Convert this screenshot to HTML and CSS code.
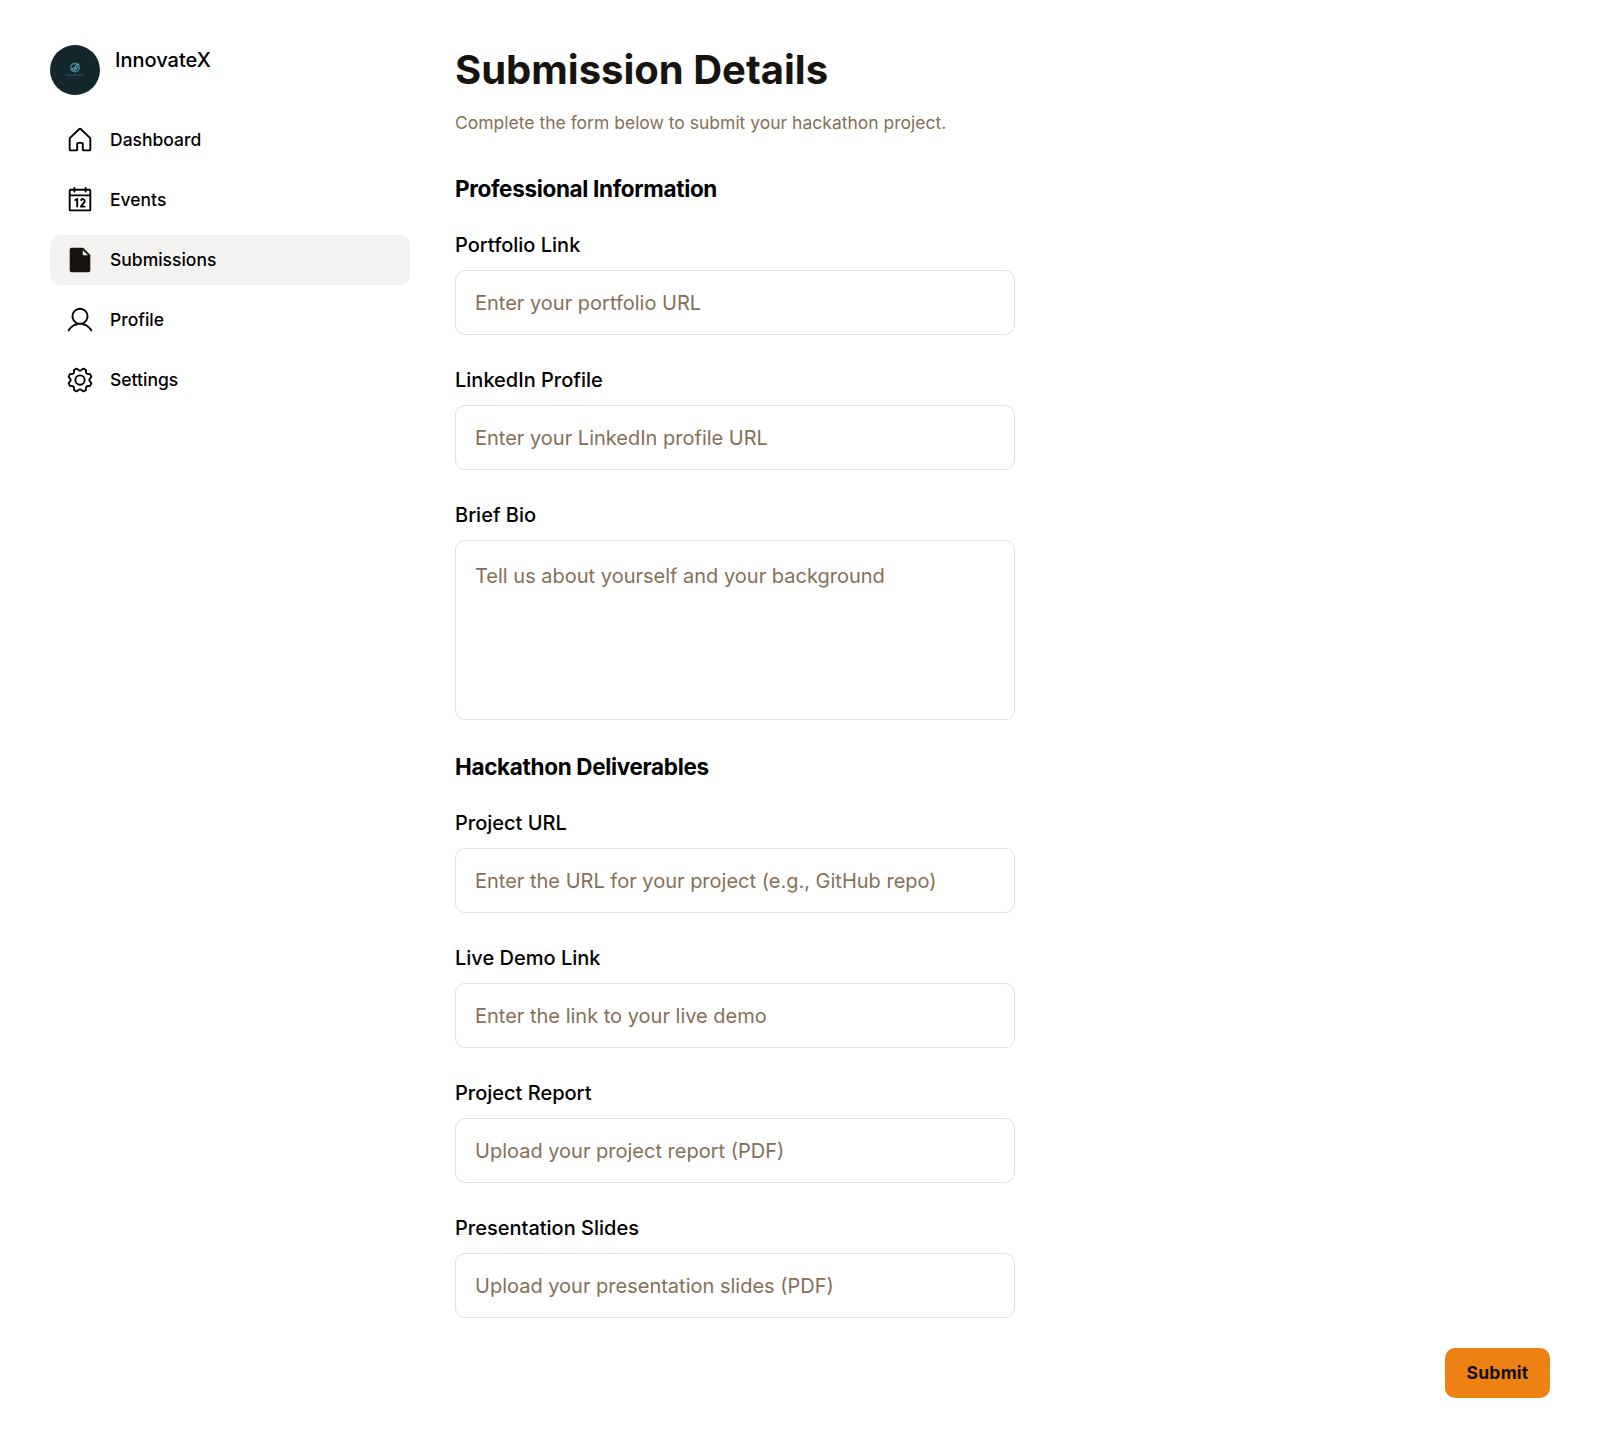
FILE: index.html
```html
<!DOCTYPE html>
<html lang="en">
<head>
<meta charset="utf-8">
<title>InnovateX – Submission Details</title>
<link rel="stylesheet" href="styles.css">
</head>
<body>
<div class="layout">
  <aside class="sidebar">
    <div class="brand">
      <svg class="avatar" viewBox="0 0 50 50" aria-hidden="true">
        <circle cx="25" cy="25" r="25" fill="#14272d"/>
        <circle cx="25" cy="22.6" r="4.2" fill="none" stroke="#3f8493" stroke-width="1.5"/>
        <path d="M21.8 25.2c1-3 3-1.6 3.6-3.4s2-2.6 3.6-2.4M24 26c.6-2.600 3-1.600 4-4.200" fill="none" stroke="#62abb8" stroke-width="1.2"/>
        <text class="avatar-name" x="24.700" y="31.300" text-anchor="middle" textLength="18.500">TECHNOBUREZT</text>
        <path d="M19 32.700h12" stroke="#24383e" stroke-width=".5"/>
      </svg>
      <span class="brand-name">InnovateX</span>
    </div>
    <nav class="nav">
      <a class="nav-item">
        <svg class="icon" viewBox="0 0 256 256"><path d="M218.83,103.77l-80-75.48a1.14,1.14,0,0,1-.11-.11,16,16,0,0,0-21.53,0l-.11.11L37.17,103.77A16,16,0,0,0,32,115.55V208a16,16,0,0,0,16,16H96a16,16,0,0,0,16-16V160h32v48a16,16,0,0,0,16,16h48a16,16,0,0,0,16-16V115.55A16,16,0,0,0,218.83,103.77ZM208,208H160V160a16,16,0,0,0-16-16H112a16,16,0,0,0-16,16v48H48V115.55l.11-.1L128,40l79.9,75.43.11.1Z"/></svg>
        <span class="nav-label">Dashboard</span>
      </a>
      <a class="nav-item">
        <svg class="icon" viewBox="0 0 256 256"><path d="M208,32H184V24a8,8,0,0,0-16,0v8H88V24a8,8,0,0,0-16,0v8H48A16,16,0,0,0,32,48V208a16,16,0,0,0,16,16H208a16,16,0,0,0,16-16V48A16,16,0,0,0,208,32ZM72,48v8a8,8,0,0,0,16,0V48h80v8a8,8,0,0,0,16,0V48h24V80H48V48ZM208,208H48V96H208V208Zm-96-88v64a8,8,0,0,1-16,0V132.94l-4.42,2.22a8,8,0,0,1-7.16-14.32l16-8A8,8,0,0,1,112,120Zm59.16,30.45L152,176h16a8,8,0,0,1,0,16H136a8,8,0,0,1-6.4-12.8l28.78-38.37A8,8,0,1,0,145.07,132a8,8,0,1,1-13.85-8A24,24,0,0,1,176,136,23.76,23.76,0,0,1,171.16,150.45Z"/></svg>
        <span class="nav-label">Events</span>
      </a>
      <a class="nav-item nav-item-active">
        <svg class="icon" viewBox="0 0 256 256"><path d="M213.66,82.34l-56-56A8,8,0,0,0,152,24H56A16,16,0,0,0,40,40V216a16,16,0,0,0,16,16H200a16,16,0,0,0,16-16V88A8,8,0,0,0,213.66,82.34ZM152,88V44l44,44Z"/></svg>
        <span class="nav-label">Submissions</span>
      </a>
      <a class="nav-item">
        <svg class="icon" viewBox="0 0 256 256"><path d="M230.92,212c-15.23-26.33-38.7-45.21-66.09-54.16a72,72,0,1,0-73.66,0C63.78,166.78,40.31,185.66,25.08,212a8,8,0,1,0,13.85,8c18.84-32.56,52.14-52,89.07-52s70.23,19.44,89.07,52a8,8,0,1,0,13.85-8ZM72,96a56,56,0,1,1,56,56A56.06,56.06,0,0,1,72,96Z"/></svg>
        <span class="nav-label">Profile</span>
      </a>
      <a class="nav-item">
        <svg class="icon" viewBox="0 0 256 256"><path d="M128,80a48,48,0,1,0,48,48A48.05,48.05,0,0,0,128,80Zm0,80a32,32,0,1,1,32-32A32,32,0,0,1,128,160Zm88-29.84q.06-2.16,0-4.32l14.92-18.64a8,8,0,0,0,1.48-7.06,107.21,107.21,0,0,0-10.88-26.25,8,8,0,0,0-6-3.93l-23.72-2.64q-1.48-1.56-3-3L186,40.54a8,8,0,0,0-3.94-6,107.71,107.71,0,0,0-26.25-10.87,8,8,0,0,0-7.06,1.49L130.16,40Q128,40,125.84,40L107.2,25.11a8,8,0,0,0-7.06-1.48A107.6,107.6,0,0,0,73.89,34.51a8,8,0,0,0-3.93,6L67.32,64.27q-1.56,1.49-3,3L40.54,70a8,8,0,0,0-6,3.94,107.71,107.71,0,0,0-10.87,26.25,8,8,0,0,0,1.49,7.06L40,125.84Q40,128,40,130.16L25.11,148.8a8,8,0,0,0-1.48,7.06,107.21,107.21,0,0,0,10.88,26.25,8,8,0,0,0,6,3.93l23.72,2.64q1.49,1.56,3,3L70,215.46a8,8,0,0,0,3.94,6,107.71,107.71,0,0,0,26.25,10.87,8,8,0,0,0,7.06-1.49L125.84,216q2.16.06,4.32,0l18.64,14.92a8,8,0,0,0,7.06,1.48,107.21,107.21,0,0,0,26.25-10.88,8,8,0,0,0,3.93-6l2.64-23.72q1.56-1.48,3-3L215.46,186a8,8,0,0,0,6-3.94,107.71,107.71,0,0,0,10.87-26.25,8,8,0,0,0-1.49-7.06Zm-16.1-6.5a73.93,73.93,0,0,1,0,8.68,8,8,0,0,0,1.74,5.48l14.19,17.73a91.57,91.57,0,0,1-6.23,15L187,173.11a8,8,0,0,0-5.1,2.64,74.11,74.11,0,0,1-6.14,6.14,8,8,0,0,0-2.64,5.1l-2.51,22.58a91.32,91.32,0,0,1-15,6.23l-17.74-14.19a8,8,0,0,0-5-1.75h-.48a73.93,73.93,0,0,1-8.68,0,8,8,0,0,0-5.48,1.74L100.45,215.8a91.57,91.57,0,0,1-15-6.23L82.89,187a8,8,0,0,0-2.64-5.1,74.11,74.11,0,0,1-6.14-6.14,8,8,0,0,0-5.1-2.64L46.43,170.6a91.32,91.32,0,0,1-6.23-15l14.19-17.74a8,8,0,0,0,1.74-5.48,73.93,73.93,0,0,1,0-8.68,8,8,0,0,0-1.74-5.48L40.2,100.45a91.57,91.57,0,0,1,6.23-15L69,82.89a8,8,0,0,0,5.1-2.64,74.11,74.11,0,0,1,6.14-6.14A8,8,0,0,0,82.89,69L85.4,46.43a91.32,91.32,0,0,1,15-6.23l17.74,14.19a8,8,0,0,0,5.48,1.74,73.93,73.93,0,0,1,8.68,0,8,8,0,0,0,5.48-1.74L155.55,40.2a91.57,91.57,0,0,1,15,6.23L173.11,69a8,8,0,0,0,2.64,5.1,74.11,74.11,0,0,1,6.14,6.14,8,8,0,0,0,5.1,2.64l22.58,2.51a91.32,91.32,0,0,1,6.23,15l-14.19,17.74A8,8,0,0,0,199.87,123.66Z"/></svg>
        <span class="nav-label">Settings</span>
      </a>
    </nav>
  </aside>
  <main class="content">
    <header class="page-header">
      <h1 class="page-title">Submission Details</h1>
      <p class="page-subtitle">Complete the form below to submit your hackathon project.</p>
    </header>
    <form>
      <h2 class="section-title">Professional Information</h2>
      <label class="field"><span class="label">Portfolio Link</span><input class="control" placeholder="Enter your portfolio URL"></label>
      <label class="field"><span class="label">LinkedIn Profile</span><input class="control" placeholder="Enter your LinkedIn profile URL"></label>
      <label class="field"><span class="label">Brief Bio</span><textarea class="control control-area" placeholder="Tell us about yourself and your background"></textarea></label>
      <h2 class="section-title">Hackathon Deliverables</h2>
      <label class="field"><span class="label">Project URL</span><input class="control" placeholder="Enter the URL for your project (e.g., GitHub repo)"></label>
      <label class="field"><span class="label">Live Demo Link</span><input class="control" placeholder="Enter the link to your live demo"></label>
      <label class="field"><span class="label">Project Report</span><input class="control" placeholder="Upload your project report (PDF)"></label>
      <label class="field"><span class="label">Presentation Slides</span><input class="control" placeholder="Upload your presentation slides (PDF)"></label>
      <div class="actions"><button class="submit" type="button">Submit</button></div>
    </form>
  </main>
</div>
</body>
</html>
```

FILE: styles.css
```css
* {
  box-sizing: border-box;
  margin: 0;
}

body {
  min-height: 1438px;
  background: #fff;
  color: #000;
  font-family: Inter, "Noto Sans", sans-serif;
}

.layout {
  display: flex;
  gap: 5px;
  padding: 25px 30px;
}

.sidebar {
  display: flex;
  flex: 0 0 400px;
  flex-direction: column;
  gap: 20px;
  padding: 20px;
}

.brand {
  display: flex;
  gap: 15px;
}

.avatar {
  width: 50px;
  height: 50px;
}

.avatar-name {
  fill: #48656b;
  font-size: 2.6px;
}

.brand-name {
  font-size: 20px;
  font-weight: 500;
  line-height: 30px;
}

.nav {
  display: flex;
  flex-direction: column;
  gap: 10px;
}

.nav-item {
  display: flex;
  align-items: center;
  gap: 15px;
  height: 50px;
  padding: 0 15px;
  border-radius: 10px;
  font-size: 17.5px;
  font-weight: 500;
}

.nav-label {
  padding-bottom: 1px;
}

.nav-item-active {
  background: #f3f2f0;
}

.icon {
  width: 30px;
  height: 30px;
  fill: #000;
}

.nav-item-active .icon {
  fill: #171410;
}

.content {
  flex: 1;
}

.page-header {
  display: flex;
  flex-direction: column;
  gap: 15px;
  padding: 20px 20px 21px;
}

.page-title {
  color: #171410;
  font-size: 40px;
  font-weight: 700;
  line-height: 50px;
}

.page-subtitle {
  color: #857056;
  font-size: 17.5px;
  line-height: 26px;
}

.section-title {
  padding: 18px 20px 12px;
  font-size: 22.5px;
  font-weight: 700;
  letter-spacing: -0.3375px;
  line-height: 28px;
}

.field {
  display: flex;
  flex-direction: column;
  gap: 10px;
  width: 600px;
  padding: 15px 20px;
}

.label {
  font-size: 20px;
  font-weight: 500;
  line-height: 30px;
}

.control {
  height: 65px;
  padding: 17px 19px 16px;
  border: 1px solid #e5dfda;
  border-radius: 10px;
  background: #fff;
  font: 400 20px/30px Inter, "Noto Sans", sans-serif;
  resize: none;
}

.control-area {
  height: 180px;
  padding-top: 20px;
}

.control::placeholder {
  color: #857056;
  opacity: 1;
}

.actions {
  display: flex;
  justify-content: flex-end;
  padding: 15px 20px;
}

.submit {
  width: 105px;
  height: 50px;
  padding: 0 0 2px;
  border: 0;
  border-radius: 10px;
  background: #ed8113;
  color: #120f0c;
  font: 700 17.5px Inter, "Noto Sans", sans-serif;
  letter-spacing: 0.2625px;
}
```
